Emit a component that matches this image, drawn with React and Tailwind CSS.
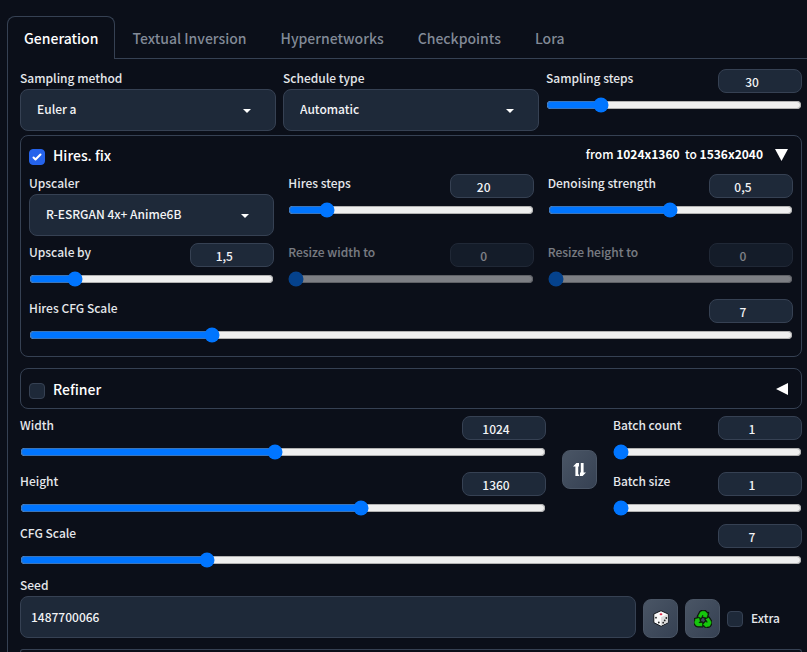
import { useId, useState } from 'react'

const TABS = ['Generation', 'Textual Inversion', 'Hypernetworks', 'Checkpoints', 'Lora']

function Dropdown({ label, options }) {
  const id = useId()
  return (
    <div className="min-w-0">
      <label htmlFor={id} className="block h-5 text-xs leading-[18px] text-gray-200">{label}</label>
      <div className="relative">
        <select
          id={id}
          className="h-[42px] w-full appearance-none rounded-lg border border-gray-700 bg-gray-800 pr-9 pb-0.5 pl-4 text-xs text-gray-100"
        >
          {options.map((o) => <option key={o}>{o}</option>)}
        </select>
        <svg viewBox="0 0 8 4" className="pointer-events-none absolute top-5 right-[25px] h-1 w-2 fill-white">
          <path d="M0 0h8L4 4z" />
        </svg>
      </div>
    </div>
  )
}

function Slider({ label, min, max, step = 1, value, disabled = false }) {
  const id = useId()
  const [current, setCurrent] = useState(value)
  return (
    <div className={disabled ? 'min-w-0 opacity-50' : 'min-w-0'}>
      <div className="flex items-start justify-between">
        <label htmlFor={id} className="text-xs leading-[18px] text-gray-200">{label}</label>
        <input
          type="text"
          inputMode="decimal"
          aria-label={`${label} value`}
          className="h-6 w-21 rounded-lg border border-gray-700 bg-gray-800 pr-4 text-center text-xs text-gray-100"
          value={String(current).replace('.', ',')}
          onChange={(e) => setCurrent(e.target.value.replace(',', '.'))}
          disabled={disabled}
        />
      </div>
      <div className="pt-1">
        <input
          id={id}
          type="range"
          className="block h-4 w-full accent-[#0075ff]"
          min={min}
          max={max}
          step={step}
          value={current}
          onChange={(e) => setCurrent(e.target.value)}
        />
      </div>
    </div>
  )
}

function Checkbox({ label, defaultChecked = false, large = false }) {
  return (
    <label className="flex items-center gap-2">
      <span className={large ? 'relative mt-1 block size-4' : 'relative block size-4'}>
        <input
          type="checkbox"
          defaultChecked={defaultChecked}
          className="peer block size-4 appearance-none rounded border border-gray-700 bg-gray-800 checked:border-[#2563eb] checked:bg-[#2563eb]"
        />
        <svg viewBox="0 0 16 16" className="pointer-events-none absolute inset-0 hidden fill-white peer-checked:block">
          <path d="M12.207 4.793a1 1 0 010 1.414l-5 5a1 1 0 01-1.414 0l-2-2a1 1 0 011.414-1.414L6.5 9.086l4.293-4.293a1 1 0 011.414 0z" />
        </svg>
      </span>
      <span className={large ? 'text-sm leading-6 text-white' : 'pb-0.5 text-xs leading-5 text-gray-200'}>{label}</span>
    </label>
  )
}

function ToolButton({ label, children }) {
  return (
    <button
      type="button"
      aria-label={label}
      className="flex h-[39px] w-[35px] shrink-0 items-center justify-center rounded-lg border border-gray-600 bg-linear-to-br from-gray-600 to-gray-700"
    >
      {children}
    </button>
  )
}

function SwapIcon() {
  return (
    <svg viewBox="0 0 13 13" className="size-[13px]" fill="#fff">
      <path d="M0 3.600 3.400 0H6v3.600H5.200V11.500H6.200V13H2.400V3.600z" />
      <path d="M13 9.400 9.600 13H7V9.400h.8V0h2.800v9.400z" />
    </svg>
  )
}

function DiceIcon() {
  return (
    <svg viewBox="0 0 16 17" className="h-[17px] w-4">
      <path d="M8 .7 15.2 4v8.6L8 16.3.8 12.6V4z" fill="#fafafa" stroke="#15181d" strokeWidth="1" strokeLinejoin="round" />
      <path d="M8 7.3 14.800 4.300v8.100L8 15.800z" fill="#dcdcdc" />
      <ellipse cx="8" cy="4.300" rx="1.400" ry="1" fill="#e0304c" />
      <g fill="#222">
        <circle cx="3" cy="7.7" r=".9" />
        <circle cx="5.8" cy="12.5" r=".9" />
        <circle cx="10.2" cy="12.7" r=".9" />
        <circle cx="11.7" cy="10.4" r=".9" />
        <circle cx="13.3" cy="8" r=".9" />
      </g>
    </svg>
  )
}

// one arm of the loop, drawn three times around the centre
const ARM = 'M3.700 6.400 5.800 2.400Q6.800 .8 8.400 .8H10.300Q11.700 .8 12.600 2.300L13.200 3.300 14.300 2.900 12.900 8 8 6.700 9.100 5.900 8.700 5.200 7.100 8.400z'

function RecycleIcon() {
  return (
    <svg viewBox="0 0 18 18" className="size-[18px]">
      <g fill="#0c140c" stroke="#0c140c" strokeWidth="2" strokeLinejoin="round">
        <path d={ARM} />
        <path d={ARM} transform="rotate(120 9 10)" />
        <path d={ARM} transform="rotate(240 9 10)" />
      </g>
      <g fill="#16c60c" stroke="#0c140c" strokeWidth=".5">
        <path d={ARM} />
        <path d={ARM} transform="rotate(120 9 10)" />
        <path d={ARM} transform="rotate(240 9 10)" />
      </g>
    </svg>
  )
}

export default function App() {
  const [tab, setTab] = useState('Generation')

  return (
    <div className="flex min-h-screen flex-col bg-[#0b0f19] pt-4 pl-[7px] font-['Noto_Sans_CJK_JP','Open_Sans',sans-serif] font-medium">
      <nav className="flex" role="tablist">
        {TABS.map((t) => (
          <button
            key={t}
            type="button"
            role="tab"
            aria-selected={t === tab}
            onClick={() => setTab(t)}
            className={
              t === tab
                ? 'h-[43px] rounded-t-lg border border-b-0 border-gray-700 px-4 text-sm text-white'
                : 'h-[43px] border-b border-gray-700 px-[17px] pt-[2px] text-sm text-gray-400/85'
            }
          >
            {t}
          </button>
        ))}
        <div className="grow border-b border-gray-700" />
      </nav>

      <main className="flex grow flex-col border-l border-gray-700 pt-[10px] pr-[5px] pl-3">
        <div className="grid grid-cols-3 gap-[7px]">
          <Dropdown label="Sampling method" options={['Euler a', 'Euler', 'DPM++ 2M']} />
          <Dropdown label="Schedule type" options={['Automatic', 'Karras', 'Exponential']} />
          <Slider label="Sampling steps" min={1} max={150} value={30} />
        </div>

        <section className="mt-1 rounded-lg border border-gray-700 px-2 pb-[13px]">
          <div className="flex h-[38px] items-center justify-between">
            <Checkbox label="Hires. fix" defaultChecked large />
            <div className="flex items-center gap-3 pr-[5px] text-xs leading-5 text-white">
              <span className="pb-0.5 whitespace-pre">from <b>1024x1360</b>  to <b>1536x2040</b></span>
              <svg viewBox="0 0 13 12" className="h-3 w-[13px] fill-white"><path d="M0 0h13L6.500 12z" /></svg>
            </div>
          </div>
          <div className="grid grid-cols-3 gap-x-[14px] gap-y-[7px]">
            <Dropdown label="Upscaler" options={['R-ESRGAN 4x+ Anime6B', 'Latent', 'Lanczos']} />
            <Slider label="Hires steps" min={0} max={150} value={20} />
            <Slider label="Denoising strength" min={0} max={1} step={0.01} value={0.5} />
            <Slider label="Upscale by" min={1} max={4} step={0.05} value={1.5} />
            <Slider label="Resize width to" min={0} max={2048} step={8} value={0} disabled />
            <Slider label="Resize height to" min={0} max={2048} step={8} value={0} disabled />
          </div>
          <div className="pt-3">
            <Slider label="Hires CFG Scale" min={0} max={30} step={0.5} value={7} />
          </div>
        </section>

        <section className="mt-[11px] flex h-[41px] items-center justify-between rounded-lg border border-gray-700 pr-[13px] pl-2">
          <Checkbox label="Refiner" large />
          <svg viewBox="0 0 12 12" className="size-3 fill-white"><path d="M12 0v12L0 6z" /></svg>
        </section>

        <div className="mt-[7px] flex items-center gap-4">
          <div className="flex min-w-0 grow flex-col gap-3">
            <Slider label="Width" min={64} max={2048} step={8} value={1024} />
            <Slider label="Height" min={64} max={2048} step={8} value={1360} />
          </div>
          <div className="pt-1.5">
            <ToolButton label="Switch width and height"><SwapIcon /></ToolButton>
          </div>
          <div className="flex w-[189px] shrink-0 flex-col gap-3">
            <Slider label="Batch count" min={1} max={100} value={1} />
            <Slider label="Batch size" min={1} max={8} value={1} />
          </div>
        </div>

        <div className="mt-2">
          <Slider label="CFG Scale" min={0} max={30} step={0.5} value={7} />
        </div>

        <div className="mt-2 flex items-end gap-[7px]">
          <div className="min-w-0 grow">
            <label htmlFor="seed" className="block h-5 text-xs leading-[18px] text-gray-200">Seed</label>
            <input
              id="seed"
              type="text"
              defaultValue="1487700066"
              className="block h-[42px] w-full rounded-lg border border-gray-700 bg-gray-800 px-[10px] pb-0.5 text-xs text-gray-100"
            />
          </div>
          <ToolButton label="Random seed"><DiceIcon /></ToolButton>
          <ToolButton label="Reuse seed"><RecycleIcon /></ToolButton>
          <div className="flex h-[39px] items-center pr-[22px]">
            <Checkbox label="Extra" />
          </div>
        </div>

        <section className="mt-[11px] min-h-[3px] grow rounded-t-lg border border-b-0 border-gray-700" />
      </main>
    </div>
  )
}
